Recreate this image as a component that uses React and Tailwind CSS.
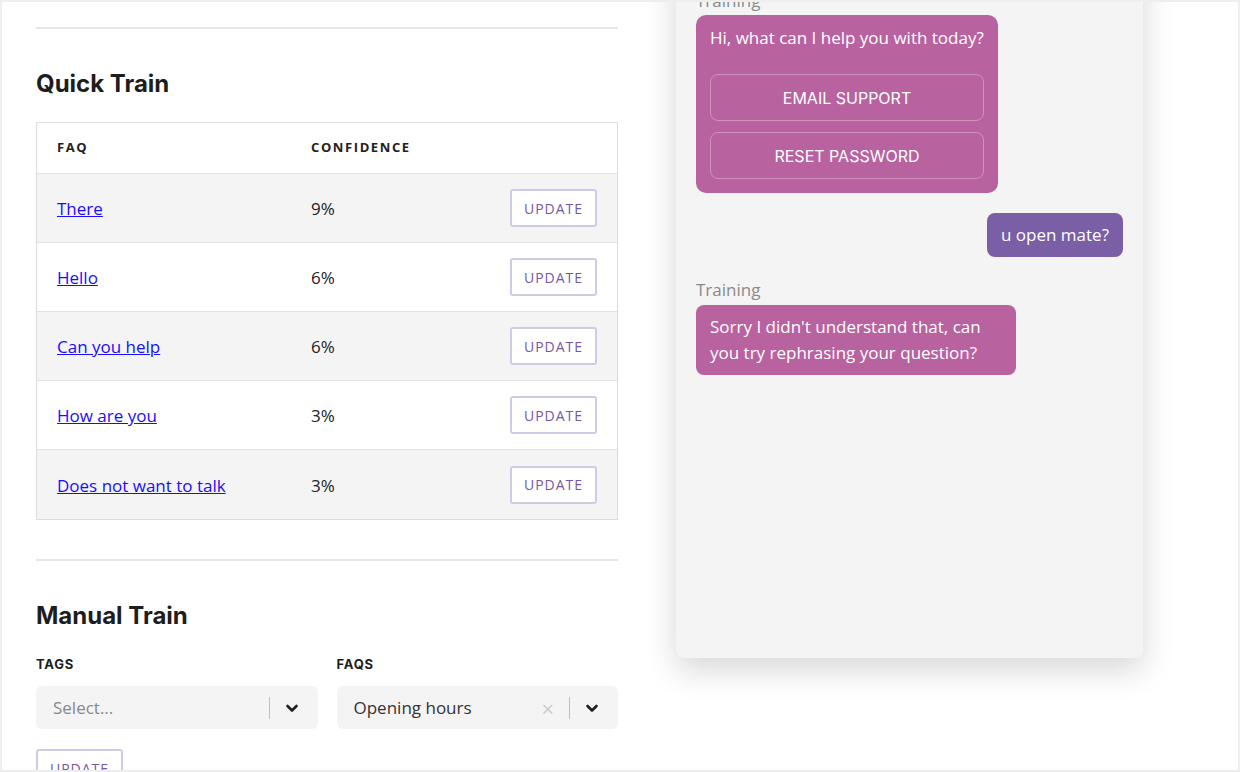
import React from "react";

const rows = [
  { faq: "There", conf: "9%" },
  { faq: "Hello", conf: "6%" },
  { faq: "Can you help", conf: "6%" },
  { faq: "How are you", conf: "3%" },
  { faq: "Does not want to talk", conf: "3%" },
];

const heading = { fontFamily: "Inter, 'Liberation Sans', sans-serif" };
const body = "font-['Open_Sans','Liberation_Sans',sans-serif]";
const display = "font-['Inter','Liberation_Sans',sans-serif]";

const Chevron = () => (
  <svg width="16" height="16" viewBox="0 0 16 16" fill="none" stroke="#1f1f1f" strokeWidth="2.6" strokeLinecap="round" strokeLinejoin="round">
    <path d="M3.5 6 8 10.5 12.5 6" />
  </svg>
);

const UpdateButton = () => (
  <button className={`${body} h-[38px] w-[87px] rounded-[3px] border-2 border-[#d3c9e6] bg-white text-[14px] tracking-[1px] text-[#7557a6]`}>
    UPDATE
  </button>
);

const Select = ({ value, placeholder, clearable }) => (
  <div className={`${body} flex h-[43px] w-full items-center rounded-[6px] bg-[#f4f4f4] pl-[17px] pr-[18px]`}>
    <span className={`flex-1 text-[17px] ${value ? "text-[#333]" : "text-[#888]"}`}>
      {value || placeholder}
    </span>
    {clearable && <span className="mr-[15px] text-[22px] leading-none text-[#cccccc]">×</span>}
    <span className="mr-[14px] h-[22px] w-px bg-[#bdbdbd]" />
    <Chevron />
  </div>
);

export default function App() {
  return (
    <div className="h-[772px] w-[1240px] overflow-hidden border-2 border-[#eeeeee] bg-white">
      <div className="flex items-start pl-[34px]">
        {/* left column */}
        <div className="w-[582px] shrink-0">
          <div className="mt-[25px] h-[2px] bg-[#e6e6e6]" />
          <h2 style={heading} className="mt-[39px] text-[24px] font-bold leading-[32px] text-[#1d1d1d]">
            Quick Train
          </h2>

          <div className={`${body} mt-[22px] border border-[#dcdcdc]`}>
            <div className="flex h-[51px] items-center border-b border-[#e2e2e2] bg-white pl-[20px] text-[13px] font-bold tracking-[1.6px] text-[#222]">
              <span className="w-[254px]">FAQ</span>
              <span>CONFIDENCE</span>
            </div>
            {rows.map((r, i) => (
              <div
                key={r.faq}
                className={`flex h-[69px] items-center pl-[20px] pr-[20px] ${i < rows.length - 1 ? "border-b border-[#e2e2e2]" : ""} ${i % 2 === 0 ? "bg-[#f4f4f4]" : "bg-white"}`}
              >
                <a href="#" className="w-[254px] pt-[2px] text-[17px] text-[#1a0dff] underline">
                  {r.faq}
                </a>
                <span className="flex-1 pt-[2px] text-[17px] text-[#222]">{r.conf}</span>
                <UpdateButton />
              </div>
            ))}
          </div>

          <div className="mt-[39px] h-[2px] bg-[#e6e6e6]" />
          <h2 style={heading} className="mt-[39px] text-[24px] font-bold leading-[32px] text-[#1d1d1d]">
            Manual Train
          </h2>

          <div className="mt-[22px] flex gap-[19px]">
            <div className="flex flex-1 flex-col">
              <span className={`${display} mb-[12px] text-[13px] font-bold leading-[20px] tracking-[0.8px] text-[#1d1d1d]`}>TAGS</span>
              <Select placeholder="Select..." />
            </div>
            <div className="flex flex-1 flex-col">
              <span className={`${display} mb-[12px] text-[13px] font-bold leading-[20px] tracking-[0.8px] text-[#1d1d1d]`}>FAQS</span>
              <Select value="Opening hours" clearable />
            </div>
          </div>

          <div className="mt-[20px]">
            <UpdateButton />
          </div>
        </div>

        {/* chat preview */}
        <div className="ml-[58px] mt-[-60px] h-[716px] w-[467px] shrink-0 rounded-[8px] bg-[#f4f4f4] px-[20px] pt-[47px] shadow-[0_12px_32px_rgba(0,0,0,0.16)]">
          <div className={`${body} text-[17px] leading-[24px] text-[#8a8a8a]`}>Training</div>
          <div className={`${body} mt-[2px] w-[302px] rounded-[10px] bg-[#b8629f] px-[14px] pb-[14px] pt-[10px] text-white`}>
            <p className="text-[17px] leading-[26px]">Hi, what can I help you with today?</p>
            <div className={`${display} mt-[23px] flex flex-col gap-[11px]`}>
              <button className="h-[47px] rounded-[8px] border border-white/30 text-[16px] font-normal text-white">
                EMAIL SUPPORT
              </button>
              <button className="h-[47px] rounded-[8px] border border-white/30 text-[16px] font-normal text-white">
                RESET PASSWORD
              </button>
            </div>
          </div>

          <div className="mt-[20px] flex justify-end">
            <div className={`${body} flex h-[44px] items-center rounded-[8px] bg-[#7a5ea6] px-[14px] text-[17px] text-white`}>
              u open mate?
            </div>
          </div>

          <div className={`${body} mt-[21px] text-[17px] leading-[24px] text-[#8a8a8a]`}>Training</div>
          <div className={`${body} mt-[3px] w-[320px] rounded-[8px] bg-[#b8629f] px-[14px] py-[9px] text-[17px] leading-[26px] text-white`}>
            Sorry I didn't understand that, can you try rephrasing your question?
          </div>
        </div>
      </div>
    </div>
  );
}
